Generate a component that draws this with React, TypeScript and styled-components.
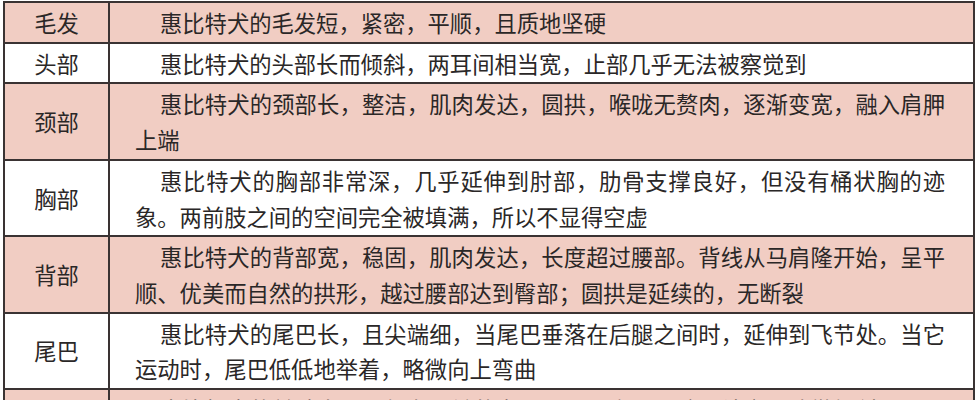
import React from "react";
import styled, { createGlobalStyle } from "styled-components";

const GlobalStyle = createGlobalStyle`
  html, body {
    margin: 0;
    padding: 0;
    background: #ffffff;
  }
  body {
    font-family: "Noto Sans CJK SC", "Noto Sans", sans-serif;
  }
`;

const Page = styled.div`
  padding: 1px 0 0 3px;
  width: 979px;
  height: 400px;
  overflow: hidden;
  box-sizing: border-box;
`;

const Table = styled.table`
  border-collapse: separate;
  border-spacing: 0;
  table-layout: fixed;
  width: 972px;
  border-top: 2px solid #3a3333;
  border-left: 2px solid #3a3333;
  color: #2a2727;
  font-family: "Noto Sans CJK SC", "Noto Sans", sans-serif;
  font-size: 22.3px;
  line-height: 35.7px;
`;

const Row = styled.tr<{ $shaded: boolean }>`
  background: ${(p) => (p.$shaded ? "#f1cdc3" : "#ffffff")};
`;

const LabelCell = styled.td`
  width: 105px;
  box-sizing: border-box;
  padding: 2px 0 1px;
  text-align: center;
  vertical-align: middle;
  border-right: 2px solid #3a3333;
  border-bottom: 2px solid #3a3333;
  white-space: nowrap;
`;

const TextCell = styled.td`
  padding: 2px 28px 1px 25px;
  text-align: justify;
  text-indent: 25px;
  vertical-align: top;
  border-right: 2px solid #3a3333;
  border-bottom: 2px solid #3a3333;
  line-break: strict;
`;

type Item = { label: string; text: string };

const items: Item[] = [
  { label: "毛发", text: "惠比特犬的毛发短，紧密，平顺，且质地坚硬" },
  { label: "头部", text: "惠比特犬的头部长而倾斜，两耳间相当宽，止部几乎无法被察觉到" },
  {
    label: "颈部",
    text: "惠比特犬的颈部长，整洁，肌肉发达，圆拱，喉咙无赘肉，逐渐变宽，融入肩胛上端",
  },
  {
    label: "胸部",
    text: "惠比特犬的胸部非常深，几乎延伸到肘部，肋骨支撑良好，但没有桶状胸的迹象。两前肢之间的空间完全被填满，所以不显得空虚",
  },
  {
    label: "背部",
    text: "惠比特犬的背部宽，稳固，肌肉发达，长度超过腰部。背线从马肩隆开始，呈平顺、优美而自然的拱形，越过腰部达到臀部；圆拱是延续的，无断裂",
  },
  {
    label: "尾巴",
    text: "惠比特犬的尾巴长，且尖端细，当尾巴垂落在后腿之间时，延伸到飞节处。当它运动时，尾巴低低地举着，略微向上弯曲",
  },
  {
    label: "前肢",
    text: "惠比特犬的前肢直，显得有足够的力量，骨量充足，腕骨结实，略微倾斜，且柔韧有弹性，脚掌紧凑，趾间紧密",
  },
];

export default function App() {
  return (
    <>
      <GlobalStyle />
      <Page>
        <Table>
          <tbody>
            {items.map((item, i) => (
              <Row key={item.label} $shaded={i % 2 === 0}>
                <LabelCell>{item.label}</LabelCell>
                <TextCell>{item.text}</TextCell>
              </Row>
            ))}
          </tbody>
        </Table>
      </Page>
    </>
  );
}
